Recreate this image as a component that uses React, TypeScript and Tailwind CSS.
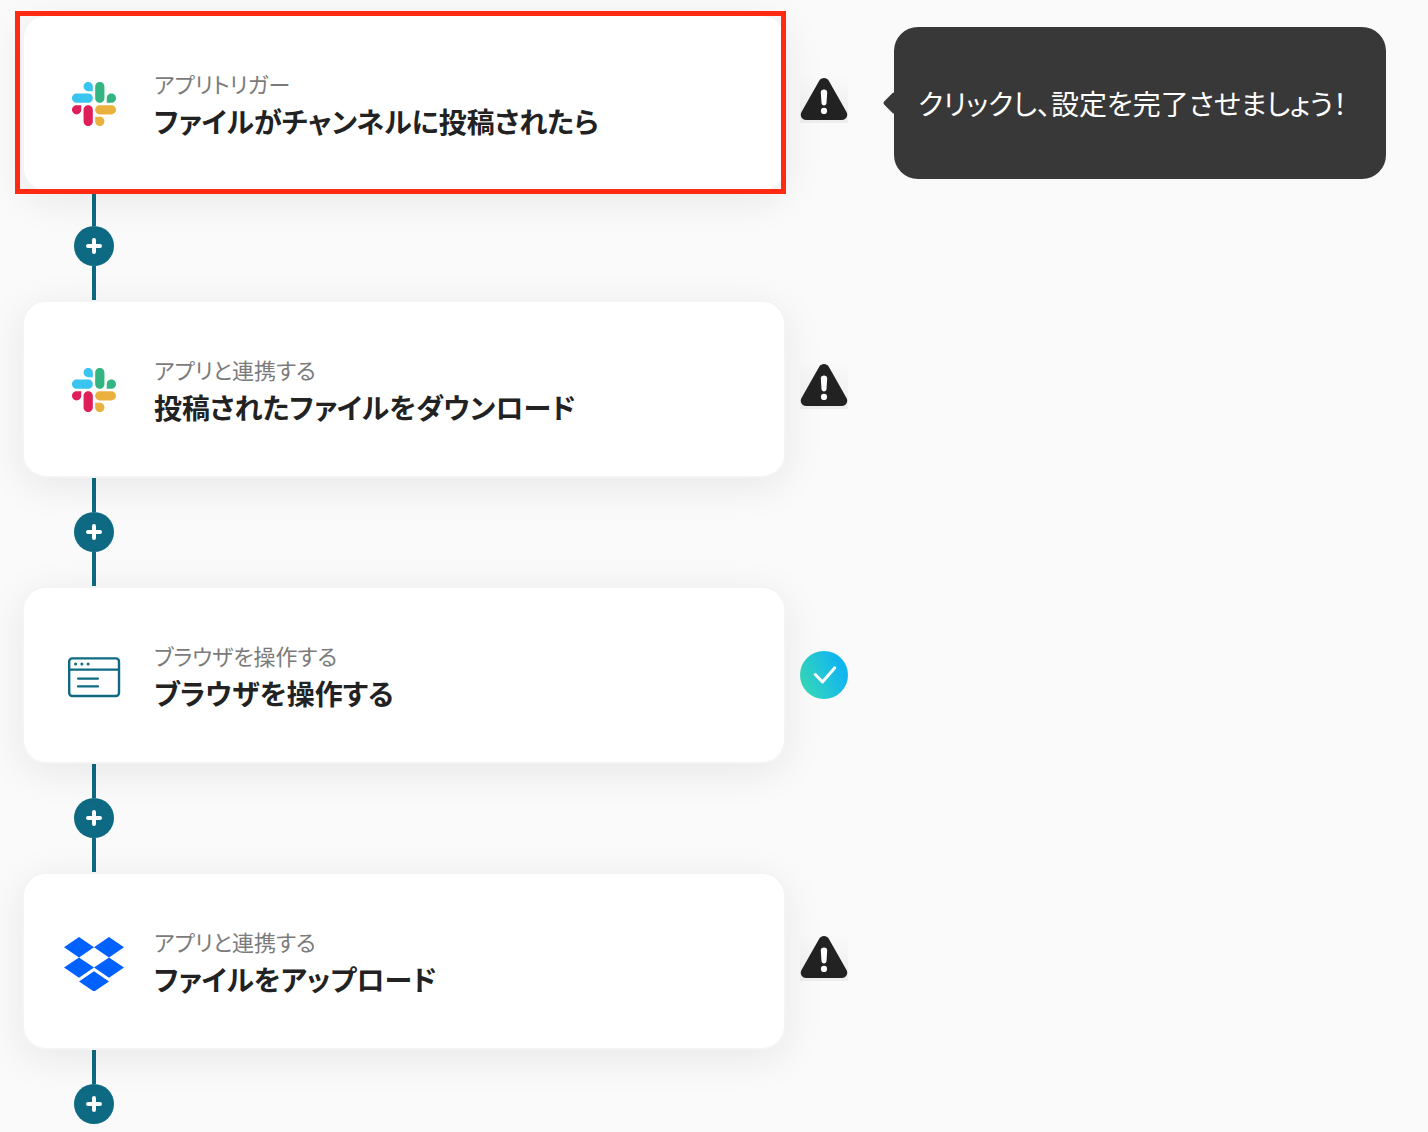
import React from 'react';

type IconName = 'slack' | 'browser' | 'dropbox';
type Status = 'warning' | 'done';

interface Step {
  icon: IconName;
  label: string;
  title: string;
  status: Status;
  selected?: boolean;
  hint?: string;
}

const steps: Step[] = [
  {
    icon: 'slack',
    label: 'アプリトリガー',
    title: 'ファイルがチャンネルに投稿されたら',
    status: 'warning',
    selected: true,
    hint: 'クリックし、設定を完了させましょう！'
  },
  {
    icon: 'slack',
    label: 'アプリと連携する',
    title: '投稿されたファイルをダウンロード',
    status: 'warning'
  },
  {
    icon: 'browser',
    label: 'ブラウザを操作する',
    title: 'ブラウザを操作する',
    status: 'done'
  },
  {
    icon: 'dropbox',
    label: 'アプリと連携する',
    title: 'ファイルをアップロード',
    status: 'warning'
  }
];

const SlackIcon = () => (
  <svg viewBox="0 0 122.8 122.8" className="mt-0.5 size-11" aria-hidden="true">
    <path
      fill="#de1f5a"
      d="M25.8 77.6c0 7.1-5.8 12.9-12.9 12.9S0 84.7 0 77.6s5.8-12.9 12.9-12.9h12.9v12.9zm6.5 0c0-7.1 5.8-12.9 12.9-12.9s12.9 5.8 12.9 12.9v32.3c0 7.1-5.8 12.9-12.9 12.9s-12.9-5.8-12.9-12.9V77.6z"
    />
    <path
      fill="#39c5ef"
      d="M45.2 25.8c-7.1 0-12.9-5.8-12.9-12.9S38.1 0 45.2 0s12.9 5.8 12.9 12.9v12.9H45.2zm0 6.5c7.1 0 12.9 5.8 12.9 12.9s-5.8 12.9-12.9 12.9H12.9C5.8 58.1 0 52.3 0 45.2s5.8-12.9 12.9-12.9h32.3z"
    />
    <path
      fill="#32b580"
      d="M97 45.2c0-7.1 5.8-12.9 12.9-12.9s12.9 5.8 12.9 12.9-5.8 12.9-12.9 12.9H97V45.2zm-6.5 0c0 7.1-5.8 12.9-12.9 12.9s-12.9-5.8-12.9-12.9V12.9C64.7 5.8 70.5 0 77.6 0s12.9 5.8 12.9 12.9v32.3z"
    />
    <path
      fill="#eab13e"
      d="M77.6 97c7.1 0 12.9 5.8 12.9 12.9s-5.8 12.9-12.9 12.9-12.9-5.8-12.9-12.9V97h12.9zm0-6.5c-7.1 0-12.9-5.8-12.9-12.9s5.8-12.9 12.9-12.9h32.3c7.1 0 12.9 5.8 12.9 12.9s-5.8 12.9-12.9 12.9H77.6z"
    />
  </svg>
);

const BrowserIcon = () => (
  <svg viewBox="0 0 60 60" className="size-[60px]" fill="none" stroke="#0e6a82" aria-hidden="true">
    <rect x="5.2" y="13.4" width="49.8" height="37.6" rx="3" strokeWidth="2.4" />
    <path d="M5 24.6h50" strokeWidth="2.3" />
    <path d="M14 33.6h20M14 41.4h20" strokeWidth="2.2" strokeLinecap="round" />
    <g fill="#0e6a82" stroke="none">
      <circle cx="11.6" cy="19" r="1.5" />
      <circle cx="17.9" cy="19" r="1.5" />
      <circle cx="24.1" cy="19" r="1.5" />
    </g>
  </svg>
);

const DropboxIcon = () => (
  <svg viewBox="0 0 60 60" className="size-[60px]" fill="#0061ff" aria-hidden="true">
    <path d="M15 6l15 10.2-15 10.2L0 16.2zM45 6l15 10.2-15 10.2-15-10.2zM15 26.4l15 10.2-15 10.2L0 36.6zM45 26.4l15 10.2-15 10.2-15-10.2zM30 40.2l15 10.2-15 10.2-15-10.2z" />
  </svg>
);

const StepIcon: React.FC<{ name: IconName }> = ({ name }) => {
  if (name === 'slack') return <SlackIcon />;
  if (name === 'browser') return <BrowserIcon />;
  return <DropboxIcon />;
};

const WarningIcon = () => (
  <svg
    viewBox="0 0 48 48"
    className="mb-2 size-12 shrink-0 bg-linear-to-b from-black/0 to-black/5"
    role="img"
    aria-label="未設定"
  >
    <path
      fill="#222"
      d="M19.2 5.7c2.1-3.6 7.5-3.6 9.6 0l17.7 31.4c2 3.500-.3 7.900-4.400 7.900H5.900c-4.100 0-6.400-4.400-4.400-7.900z"
    />
    <path fill="#fff" d="M20.8 17.500c-.1-1.700 1.300-2.900 3.200-2.900s3.300 1.200 3.200 2.900l-.7 10.400c-.1 1.500-1.100 2.500-2.500 2.500s-2.400-1-2.500-2.500z" />
    <circle cx="24" cy="35.9" r="3.1" fill="#fff" />
  </svg>
);

const DoneIcon = () => (
  <svg viewBox="0 0 48 48" className="size-12 shrink-0" fill="none" role="img" aria-label="設定済み">
    <defs>
      <linearGradient id="done" x1="4" y1="32" x2="40" y2="16" gradientUnits="userSpaceOnUse">
        <stop stopColor="#33d6bd" />
        <stop offset="1" stopColor="#12b6ee" />
      </linearGradient>
    </defs>
    <circle cx="24" cy="24" r="24" fill="url(#done)" />
    <path d="M15.3 23.5l7.2 7.500 12.300-14.200" stroke="#fff" strokeWidth="3" strokeLinecap="round" strokeLinejoin="round" />
  </svg>
);

const Connector: React.FC<{ last: boolean }> = ({ last }) => (
  <div className="ml-[52px] flex w-10 flex-col items-center">
    <span className="h-[34px] w-1 bg-[#0e6a82]" />
    <button
      type="button"
      aria-label="ステップを追加"
      className="flex size-10 items-center justify-center rounded-full bg-[#0e6a82]"
    >
      <svg viewBox="0 0 16 16" className="size-4" aria-hidden="true">
        <path d="M8 2v12M2 8h12" stroke="#fff" strokeWidth="4" strokeLinecap="round" />
      </svg>
    </button>
    {!last && <span className="h-[34px] w-1 bg-[#0e6a82]" />}
  </div>
);

const StepCard: React.FC<{ step: Step }> = ({ step }) => (
  <button
    type="button"
    className="relative flex h-[178px] w-full max-w-[764px] items-center gap-[30px] rounded-3xl border-2 border-[#f4f4f4] bg-white pl-10 text-left shadow-[0_8px_40px_rgba(0,0,0,0.08)]"
  >
    <span className="flex size-[60px] shrink-0 items-center justify-center">
      <StepIcon name={step.icon} />
    </span>
    <span className="flex flex-col">
      <span className="text-[22px] leading-9 text-[#7b7b7b]">{step.label}</span>
      <span className="text-[28px] leading-10 font-bold text-[#222]">{step.title}</span>
    </span>
    {step.selected && (
      <span className="pointer-events-none absolute -top-[5px] -right-0.5 -bottom-1 -left-[9px] border-5 border-[#ff2a12]" />
    )}
  </button>
);

const Hint: React.FC<{ text: string }> = ({ text }) => (
  <div className="relative ml-8 flex h-[152px] min-w-[492px] shrink-0 items-center rounded-3xl bg-[#383838] px-6">
    <span className="absolute top-1/2 -left-2 size-4 -translate-y-1/2 rotate-45 rounded-xs bg-[#383838]" />
    <p className="text-[28px] leading-10 whitespace-nowrap text-white">{text}</p>
  </div>
);

const App: React.FC = () => {
  return (
    <main
      lang="ja"
      className="min-h-screen bg-[#fafafa] pt-3.5 pb-2 pl-[22px] font-['Noto_Sans_CJK_JP',sans-serif] [font-feature-settings:'palt']"
    >
      {steps.map((step, idx) => (
        <section key={idx}>
          <div className="flex items-center gap-3.5">
            <StepCard step={step} />
            {step.status === 'warning' ? <WarningIcon /> : <DoneIcon />}
            {step.hint && <Hint text={step.hint} />}
          </div>
          <Connector last={idx === steps.length - 1} />
        </section>
      ))}
    </main>
  );
};

export default App;
